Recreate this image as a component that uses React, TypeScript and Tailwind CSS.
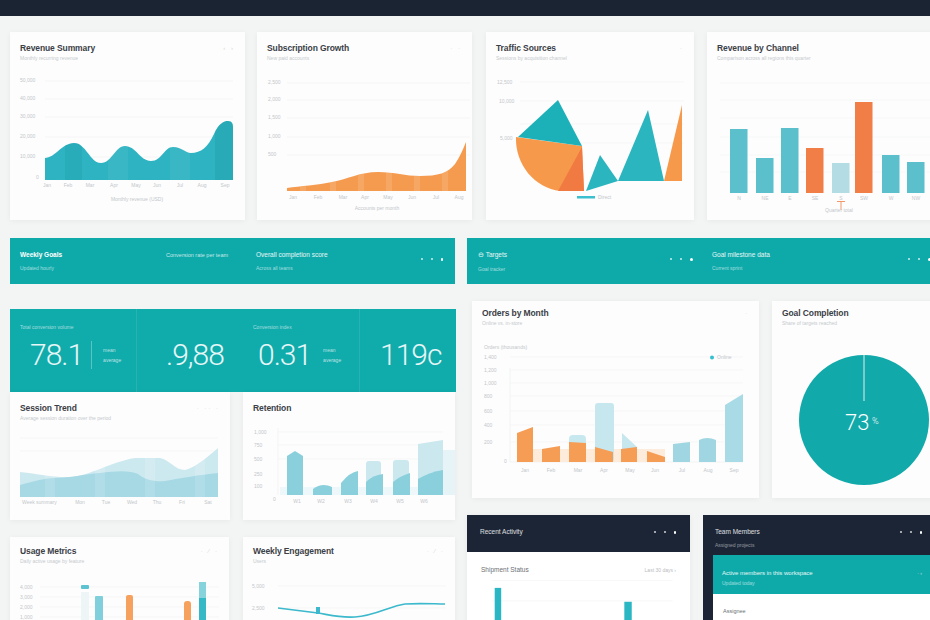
import React from "react";

const tick = { fontSize: 5, fill: "#c3c7cb" } as const;

function Card({ className, children }: { className: string; children?: React.ReactNode }) {
  return (
    <div
      className={`shrink-0 flex flex-col overflow-hidden bg-[#fdfdfd] shadow-[0_1px_6px_rgba(0,0,0,0.05)] ${className}`}
    >
      {children}
    </div>
  );
}

function Head({
  title,
  sub,
  pt,
  h,
  icons,
}: {
  title: string;
  sub: string;
  pt: string;
  h: string;
  icons?: string;
}) {
  return (
    <div className={`flex shrink-0 items-start justify-between px-[10px] ${pt} ${h}`}>
      <div className="flex flex-col">
        <span className="text-[8.5px] font-bold leading-[10px] tracking-[-0.1px] text-[#3b4046]">{title}</span>
        <span className="mt-[2px] text-[5px] leading-[6px] text-[#c6cacd]">{sub}</span>
      </div>
      {icons && <span className="pt-[1px] text-[6px] leading-[8px] tracking-[2px] text-[#d3d6d9]">{icons}</span>}
    </div>
  );
}

function Dots({ className }: { className: string }) {
  return (
    <div className={`flex items-center gap-[8px] ${className}`}>
      <span className="h-[2px] w-[2px] rounded-full bg-white/80" />
      <span className="h-[2px] w-[2px] rounded-full bg-white/80" />
      <span className="h-[2.5px] w-[2.5px] rounded-full bg-white" />
    </div>
  );
}

function Stat({ value, label }: { value: string; label?: string }) {
  return (
    <div className="flex flex-col pt-[15px]">
      <span className="h-[6px] text-[5px] leading-[6px] text-white/60">{label ?? ""}</span>
      <div className="mt-[10px] flex h-[30px] items-center">
        <span className="font-['Roboto',sans-serif] text-[30px] font-light leading-[30px] tracking-[-1px] text-white/90">
          {value}
        </span>
      </div>
    </div>
  );
}

export default function App() {
  return (
    <div className="h-[620px] w-[930px] overflow-hidden bg-[#f3f4f4] font-['Liberation_Sans',Arial,sans-serif]">
      <div className="h-4 bg-[#1a2433]" />

      {/* row 1 */}
      <div className="ml-[10px] mt-4 flex items-start">
        <Card className="h-[188px] w-[235px]">
          <Head title="Revenue Summary" sub="Monthly recurring revenue" pt="pt-[11px]" h="h-[36px]" icons="‹ ›" />
          <svg width={235} height={152} viewBox="10 68 235 152">
            <defs>
              <clipPath id="c1">
                <path d="M45 180 L45 158 C55 158 62 143 74 143 C86 143 90 163 101 163 C112 163 115 146 125 146 C136 146 140 161 151 161 C162 161 164 147 173 147 C182 147 185 153 191 153 C201 153 208 147 214 134 C219 123 224 121 228 121 C232 121 233 124 233 127 L233 180 Z" />
              </clipPath>
            </defs>
            {[81, 99, 117, 137, 157].map((y) => (
              <line key={y} x1={45} x2={233} y1={y} y2={y} stroke="#f1f2f3" strokeWidth={0.6} />
            ))}
            {["50,000", "40,000", "30,000", "20,000", "10,000"].map((t, i) => (
              <text key={t} x={20} y={[82, 100, 118, 138, 158][i]} {...tick}>
                {t}
              </text>
            ))}
            <text x={36} y={179} {...tick}>0</text>
            <g clipPath="url(#c1)">
              <rect x={45} y={100} width={190} height={80} fill="#2db3c1" />
              <rect x={65} y={100} width={17} height={80} fill="#1a8f9c" opacity={0.18} />
              <rect x={108} y={100} width={20} height={80} fill="#ffffff" opacity={0.06} />
              <rect x={170} y={100} width={20} height={80} fill="#ffffff" opacity={0.06} />
              <rect x={215} y={100} width={18} height={80} fill="#1a8f9c" opacity={0.25} />
            </g>
            {["Jan", "Feb", "Mar", "Apr", "May", "Jun", "Jul", "Aug", "Sep"].map((t, i) => (
              <text key={t} x={[47, 68, 90, 114, 136, 157, 180, 202, 225][i]} y={187} textAnchor="middle" {...tick}>
                {t}
              </text>
            ))}
            <text x={137} y={201} textAnchor="middle" {...tick}>Monthly revenue (USD)</text>
          </svg>
        </Card>

        <Card className="ml-[12px] h-[188px] w-[215px]">
          <Head title="Subscription Growth" sub="New paid accounts" pt="pt-[11px]" h="h-[36px]" icons="· ·" />
          <svg width={215} height={152} viewBox="257 68 215 152">
            <defs>
              <clipPath id="c2">
                <path d="M287 191 L287 188 C300 186 318 185 332 182 C348 179 360 172 378 172 C395 172 405 176 420 176 C438 176 448 173 455 164 C460 157 463 149 466 142 L466 191 Z" />
              </clipPath>
            </defs>
            {[83, 100, 118, 137, 155].map((y) => (
              <line key={y} x1={287} x2={470} y1={y} y2={y} stroke="#f1f2f3" strokeWidth={0.6} />
            ))}
            {["2,500", "2,000", "1,500", "1,000", "500"].map((t, i) => (
              <text key={t} x={268} y={[84, 101, 119, 138, 156][i]} {...tick}>
                {t}
              </text>
            ))}
            <g clipPath="url(#c2)">
              <rect x={287} y={130} width={180} height={62} fill="#f59b4f" />
              {[300, 330, 358, 386, 414, 442].map((x) => (
                <rect key={x} x={x} y={130} width={6} height={62} fill="#ffffff" opacity={0.12} />
              ))}
            </g>
            {["Jan", "Feb", "Mar", "Apr", "May", "Jun", "Jul", "Aug"].map((t, i) => (
              <text key={t} x={[293, 318, 343, 365, 388, 412, 436, 459][i]} y={199} textAnchor="middle" {...tick}>
                {t}
              </text>
            ))}
            <text x={377} y={210} textAnchor="middle" {...tick}>Accounts per month</text>
          </svg>
        </Card>

        <Card className="ml-[14px] h-[188px] w-[208px]">
          <Head title="Traffic Sources" sub="Sessions by acquisition channel" pt="pt-[11px]" h="h-[36px]" icons="·" />
          <svg width={208} height={152} viewBox="486 68 208 152">
            {[82, 101, 124, 143].map((y) => (
              <line key={y} x1={520} x2={684} y1={y} y2={y} stroke="#f3f4f5" strokeWidth={0.6} />
            ))}
            <text x={497} y={84} {...tick}>12,500</text>
            <text x={499} y={103} {...tick}>10,000</text>
            <text x={500} y={140} {...tick}>5,000</text>
            <path d="M516 137 L582 146 L584 191 L560 191 C535 188 515 165 516 137 Z" fill="#f7994b" />
            <path d="M558 191 L584 191 L582 147 Z" fill="#f07a42" />
            <path d="M518 137 L558 100 L582 146 Z" fill="#1cb0b8" />
            <path d="M586 191 L600 155 L618 181 Z" fill="#2ab5bf" />
            <path d="M618 181 L648 110 L664 181 Z" fill="#2ab5bf" />
            <path d="M664 181 L682 105 L682 181 Z" fill="#f7994b" />
            <rect x={577} y={196} width={18} height={2.5} fill="#3cbfcf" />
            <text x={598} y={199} {...tick}>Direct</text>
          </svg>
        </Card>

        <Card className="ml-[13px] h-[188px] w-[230px]">
          <Head title="Revenue by Channel" sub="Comparison across all regions this quarter" pt="pt-[11px]" h="h-[36px]" />
          <svg width={230} height={152} viewBox="707 68 230 152">
            {[83, 100, 118, 137, 155, 172].map((y) => (
              <line key={y} x1={720} x2={935} y1={y} y2={y} stroke="#f4f5f6" strokeWidth={0.6} />
            ))}
            {[
              [730, 129, "#5bbfcc"],
              [756, 158, "#5bbfcc"],
              [781, 128, "#5bbfcc"],
              [806, 148, "#f17e46"],
              [832, 163, "#b3dce4"],
              [855, 102, "#f17e46"],
              [882, 155, "#5bbfcc"],
              [907, 162, "#5bbfcc"],
            ].map(([x, y, c]) => (
              <rect key={x as number} x={x as number} y={y as number} width={17.5} height={193 - (y as number)} fill={c as string} />
            ))}
            {["N", "NE", "E", "SE", "S", "SW", "W", "NW"].map((t, i) => (
              <text key={t} x={[739, 765, 790, 815, 841, 864, 891, 916][i]} y={200} textAnchor="middle" {...tick}>
                {t}
              </text>
            ))}
            <line x1={837} x2={845} y1={201.5} y2={201.5} stroke="#f17e46" strokeWidth={0.8} />
            <line x1={841} x2={841} y1={201.5} y2={210} stroke="#f17e46" strokeWidth={0.8} />
            <text x={839} y={212} textAnchor="middle" {...tick}>Quarter total</text>
          </svg>
        </Card>
      </div>

      {/* row 2: teal bars */}
      <div className="ml-[10px] mt-[18px] flex items-start">
        <div className="flex h-[46px] w-[445px] shrink-0 items-start bg-[#0eaaaa] pl-[10px] pt-[13px] text-white">
          <div className="flex w-[146px] flex-col">
            <span className="text-[6.5px] font-bold leading-[8px]">Weekly Goals</span>
            <span className="mt-[6px] text-[5px] leading-[6px] text-white/60">Updated hourly</span>
          </div>
          <span className="w-[90px] text-[5.5px] leading-[8px] text-white/75">Conversion rate per team</span>
          <div className="flex flex-1 flex-col">
            <span className="text-[6.5px] leading-[8px] text-white/90">Overall completion score</span>
            <span className="mt-[6px] text-[5px] leading-[6px] text-white/60">Across all teams</span>
          </div>
          <Dots className="mr-[12px] mt-[7px]" />
        </div>
        <div className="ml-[12px] flex h-[46px] w-[470px] shrink-0 items-start bg-[#0eaaaa] pl-[11px] pt-[13px] text-white">
          <div className="flex w-[192px] flex-col">
            <span className="text-[6.5px] leading-[8px] text-white/90">⊖ Targets</span>
            <span className="mt-[7px] text-[5px] leading-[6px] text-white/60">Goal tracker</span>
          </div>
          <Dots className="mt-[7px] w-[42px]" />
          <div className="flex w-[196px] flex-col">
            <span className="text-[6.5px] leading-[8px] text-white/90">Goal milestone data</span>
            <span className="mt-[6px] text-[5px] leading-[6px] text-white/60">Current sprint</span>
          </div>
          <Dots className="mt-[7px]" />
        </div>
      </div>

      {/* rows 3 & 4 */}
      <div className="ml-[10px] flex items-start">
        {/* left column */}
        <div className="mt-[25px] flex w-[446px] shrink-0 flex-col">
          <div className="flex h-[83px] bg-[#10abab]">
            <div className="w-[127px] border-r border-white/10 pl-[10px]">
              <div className="flex flex-col pt-[15px]">
                <span className="h-[6px] text-[5px] leading-[6px] text-white/60">Total conversion volume</span>
                <div className="ml-[10px] mt-[10px] flex h-[30px] items-center">
                  <span className="font-['Roboto',sans-serif] text-[30px] font-light leading-[30px] tracking-[-1px] text-white/90">
                    78.1
                  </span>
                  <span className="ml-[8px] h-[28px] w-px bg-white/30" />
                  <div className="ml-[11px] flex flex-col gap-[4px] text-[5px] leading-[6px] text-white/70">
                    <span>mean</span>
                    <span>average</span>
                  </div>
                </div>
              </div>
            </div>
            <div className="w-[106px] pl-[29px]">
              <Stat value=".9,88" />
            </div>
            <div className="w-[117px] border-r border-white/10 pl-[10px]">
              <div className="flex flex-col pt-[15px]">
                <span className="h-[6px] text-[5px] leading-[6px] text-white/60">Conversion index</span>
                <div className="ml-[5px] mt-[10px] flex h-[30px] items-center">
                  <span className="font-['Roboto',sans-serif] text-[30px] font-light leading-[30px] tracking-[-1px] text-white/90">
                    0.31
                  </span>
                  <div className="ml-[12px] flex flex-col gap-[4px] text-[5px] leading-[6px] text-white/70">
                    <span>mean</span>
                    <span>average</span>
                  </div>
                </div>
              </div>
            </div>
            <div className="flex-1 pl-[20px]">
              <Stat value="119c" />
            </div>
          </div>

          <div className="flex items-start">
            <Card className="h-[128px] w-[220px]">
              <Head title="Session Trend" sub="Average session duration over the period" pt="pt-[11px]" h="h-[36px]" icons="· ·· ·" />
              <svg width={220} height={92} viewBox="10 428 220 92">
                <line x1={20} x2={218} y1={438} y2={438} stroke="#f3f4f5" strokeWidth={0.6} />
                <line x1={20} x2={218} y1={451} y2={451} stroke="#f3f4f5" strokeWidth={0.6} />
                <path
                  d="M20 497 L20 472 C40 474 55 478 70 477 C90 476 110 462 135 458 L160 458 C170 460 175 470 185 470 C195 468 210 455 218 448 L218 497 Z"
                  fill="#cde9f0"
                />
                <path
                  d="M20 497 L20 485 C35 481 45 478 55 478 C70 478 85 474 100 473 C115 471 130 470 138 474 C145 480 155 482 165 481 C180 478 200 475 218 473 L218 497 Z"
                  fill="#a6d9e4"
                />
                {[45, 95, 145, 195].map((x) => (
                  <rect key={x} x={x} y={440} width={10} height={57} fill="#ffffff" opacity={0.12} />
                ))}
                <text x={22} y={504} {...tick}>Week summary</text>
                {["Mon", "Tue", "Wed", "Thu", "Fri", "Sat"].map((t, i) => (
                  <text key={t} x={[80, 106, 132, 157, 182, 208][i]} y={504} textAnchor="middle" {...tick}>
                    {t}
                  </text>
                ))}
              </svg>
            </Card>
            <Card className="ml-[13px] h-[128px] w-[212px]">
              <Head title="Retention" sub="" pt="pt-[11px]" h="h-[36px]" />
              <svg width={212} height={92} viewBox="243 428 212 92">
                {[432, 445, 459].map((y) => (
                  <line key={y} x1={278} x2={443} y1={y} y2={y} stroke="#f1f3f4" strokeWidth={0.6} />
                ))}
                <line x1={278} x2={278} y1={428} y2={495} stroke="#eef0f1" strokeWidth={0.6} />
                {["1,000", "750", "500", "250", "100"].map((t, i) => (
                  <text key={t} x={254} y={[434, 447, 461, 476, 488][i]} {...tick}>
                    {t}
                  </text>
                ))}
                <text x={273} y={501} {...tick}>0</text>
                <rect x={280} y={487} width={175} height={8} fill="#eef7f9" />
                <rect x={366} y={461} width={15} height={34} rx={3} fill="#cbe8ef" />
                <rect x={393} y={460} width={16} height={35} rx={3} fill="#cbe8ef" />
                <path d="M418 495 L418 444 L443 440 L443 495 Z" fill="#cbe8ef" />
                <rect x={443} y={450} width={12} height={45} fill="#e6f4f7" />
                <path d="M287 495 L287 456 L295 451 L303 456 L303 495 Z" fill="#8acfdc" />
                <path d="M313 495 L313 489 Q322 482 332 487 L332 495 Z" fill="#8acfdc" />
                <path d="M341 495 L341 483 Q350 472 358 471 L358 495 Z" fill="#8acfdc" />
                <path d="M366 495 L366 482 Q373 475 383 474 L383 495 Z" fill="#8acfdc" />
                <path d="M393 495 L393 482 Q400 476 410 473 L410 495 Z" fill="#8acfdc" />
                <path d="M418 495 L418 479 Q430 472 443 470 L443 495 Z" fill="#8acfdc" />
                {["W1", "W2", "W3", "W4", "W5", "W6"].map((t, i) => (
                  <text key={t} x={[297, 321, 348, 374, 400, 424][i]} y={503} textAnchor="middle" {...tick}>
                    {t}
                  </text>
                ))}
              </svg>
            </Card>
          </div>

          <div className="mt-[17px] flex items-start">
            <Card className="h-[90px] w-[219px]">
              <Head title="Usage Metrics" sub="Daily active usage by feature" pt="pt-[9px]" h="h-[36px]" icons="· ⁄ ·" />
              <svg width={219} height={54} viewBox="10 573 219 54">
                {[587, 597, 607, 617].map((y) => (
                  <line key={y} x1={40} x2={219} y1={y} y2={y} stroke="#f3f4f5" strokeWidth={0.6} />
                ))}
                {["4,000", "3,000", "2,000", "1,000"].map((t, i) => (
                  <text key={t} x={20} y={[589, 599, 609, 619][i]} {...tick}>
                    {t}
                  </text>
                ))}
                <rect x={81} y={585} width={8} height={4} rx={1} fill="#5cc4d0" />
                <rect x={81} y={592} width={8} height={40} fill="#eef5f7" />
                <rect x={95} y={596} width={8} height={40} rx={1} fill="#7fd0da" />
                <rect x={126} y={595} width={7} height={40} rx={2} fill="#f6a25e" />
                <rect x={184} y={601} width={7} height={40} rx={3} fill="#f6a25e" />
                <rect x={199} y={582} width={7} height={17} fill="#86d3dc" />
                <rect x={199} y={598} width={7} height={40} fill="#35b9c6" />
              </svg>
            </Card>
            <Card className="ml-[14px] h-[90px] w-[212px]">
              <Head title="Weekly Engagement" sub="Users" pt="pt-[9px]" h="h-[36px]" icons="· ⁄ ·" />
              <svg width={212} height={54} viewBox="243 573 212 54">
                <line x1={278} x2={446} y1={586} y2={586} stroke="#f3f4f5" strokeWidth={0.6} />
                <line x1={278} x2={446} y1={608} y2={608} stroke="#f3f4f5" strokeWidth={0.6} />
                <text x={252} y={588} {...tick}>5,000</text>
                <text x={252} y={610} {...tick}>2,500</text>
                <path
                  d="M278 608 C295 610 310 612 318 613 C330 615 340 618 355 617 C375 616 390 606 405 604 C420 603 435 604 445 604"
                  fill="none"
                  stroke="#3cb9cc"
                  strokeWidth={1.6}
                />
                <rect x={316} y={607} width={4} height={7} fill="#3cb9cc" />
              </svg>
            </Card>
          </div>
        </div>

        {/* right column */}
        <div className="ml-[11px] mt-[17px] flex shrink-0 flex-col">
          <div className="ml-[5px] flex items-start">
            <Card className="h-[197px] w-[287px]">
              <Head title="Orders by Month" sub="Online vs. in-store" pt="pt-[7px]" h="h-[32px]" icons="·" />
              <svg width={287} height={165} viewBox="472 333 287 165">
                {[357, 370, 383, 396, 411, 425, 442].map((y) => (
                  <line key={y} x1={510} x2={743} y1={y} y2={y} stroke="#f3f4f5" strokeWidth={0.6} />
                ))}
                <text x={484} y={349} {...tick}>Orders (thousands)</text>
                {["1,400", "1,200", "1,000", "800", "600", "400", "200"].map((t, i) => (
                  <text key={t} x={484} y={[359, 372, 385, 398, 413, 427, 444][i]} {...tick}>
                    {t}
                  </text>
                ))}
                <text x={504} y={463} {...tick}>0</text>
                <circle cx={712} cy={357.5} r={2} fill="#33c0d0" />
                <text x={717} y={359} {...tick}>Online</text>
                <line x1={510} x2={510} y1={368} y2={462} stroke="#eceeef" strokeWidth={0.6} />
                <line x1={510} x2={743} y1={462} y2={462} stroke="#eceeef" strokeWidth={0.6} />
                <rect x={533} y={449} width={132} height={13} fill="#fdebdc" />
                <rect x={569} y={435} width={17} height={27} rx={4} fill="#c8e8ef" />
                <rect x={595} y={403} width={19} height={59} rx={3} fill="#c6e7ee" />
                <path d="M622 462 L622 433 L637 447 L637 462 Z" fill="#c6e7ee" />
                <path d="M517 462 L517 433 L533 427 L533 462 Z" fill="#f59c55" />
                <path d="M542 462 L542 449 L560 446 L560 462 Z" fill="#f59c55" />
                <path d="M569 462 L569 442 L586 443 L586 462 Z" fill="#f59c55" />
                <path d="M595 462 L595 447 L613 452 L613 462 Z" fill="#f59c55" />
                <path d="M621 462 L621 449 L637 447 L637 462 Z" fill="#f59c55" />
                <path d="M647 462 L647 451 L665 457 L665 462 Z" fill="#f59c55" />
                <path d="M673 462 L673 444 L690 442 L690 462 Z" fill="#9fd6e2" />
                <path d="M699 462 L699 440 Q707 436 716 440 L716 462 Z" fill="#9fd6e2" />
                <path d="M725 462 L725 405 L743 394 L743 462 Z" fill="#a9dbe6" />
                {["Jan", "Feb", "Mar", "Apr", "May", "Jun", "Jul", "Aug", "Sep"].map((t, i) => (
                  <text key={t} x={[525, 551, 578, 604, 630, 655, 682, 708, 734][i]} y={472} textAnchor="middle" {...tick}>
                    {t}
                  </text>
                ))}
              </svg>
            </Card>
            <Card className="ml-[13px] h-[197px] w-[170px]">
              <Head title="Goal Completion" sub="Share of targets reached" pt="pt-[7px]" h="h-[32px]" />
              <svg width={170} height={165} viewBox="772 333 170 165">
                <circle cx={864} cy={420} r={65} fill="#11a9aa" />
                <line x1={864} x2={864} y1={355} y2={401} stroke="#ffffff" strokeOpacity={0.85} strokeWidth={1} />
                <text x={845} y={430} fontSize={22} fontWeight={300} fill="#ffffff" fontFamily="Roboto, sans-serif">
                  73
                </text>
                <text x={872} y={424} fontSize={9} fontWeight={300} fill="#ffffff" fontFamily="Roboto, sans-serif">
                  %
                </text>
              </svg>
            </Card>
          </div>

          <div className="mt-[17px] flex items-start">
            <div className="flex h-[110px] w-[223px] shrink-0 flex-col bg-white shadow-[0_1px_6px_rgba(0,0,0,0.05)]">
              <div className="flex h-[39px] items-start justify-between bg-[#1b2536] pl-[13px] pr-[14px] pt-[13px]">
                <span className="text-[6.5px] leading-[8px] text-white/85">Recent Activity</span>
                <Dots className="mt-[3px]" />
              </div>
              <div className="flex items-start justify-between px-[14px] pt-[14px]">
                <span className="text-[6.5px] leading-[8px] text-[#6b7075]">Shipment Status</span>
                <span className="text-[5px] leading-[8px] text-[#b9bdc1]">Last 30 days ›</span>
              </div>
              <svg width={223} height={55} viewBox="467 578 223 55">
                <line x1={485} x2={680} y1={585} y2={585} stroke="#f2f3f4" strokeWidth={0.6} />
                <line x1={485} x2={680} y1={607} y2={607} stroke="#f2f3f4" strokeWidth={0.6} />
                <rect x={488} y={593} width={7} height={40} fill="#2bb6c4" />
                <rect x={628} y={608} width={8} height={40} fill="#2bb6c4" />
              </svg>
            </div>

            <div className="ml-[13px] flex h-[110px] w-[227px] shrink-0 flex-col bg-[#1b2536]">
              <div className="flex h-[40px] items-start justify-between pl-[12px] pr-[8px] pt-[13px]">
                <div className="flex flex-col">
                  <span className="text-[6.5px] leading-[8px] text-white/85">Team Members</span>
                  <span className="mt-[6px] text-[5px] leading-[6px] text-white/50">Assigned projects</span>
                </div>
                <Dots className="mt-[3px]" />
              </div>
              <div className="ml-[10px] flex flex-1 flex-col bg-white">
                <div className="flex h-[39px] items-start justify-between bg-[#0eaaaa] pl-[9px] pr-[8px] pt-[14px]">
                  <div className="flex flex-col">
                    <span className="text-[6px] leading-[8px] text-white/90">Active members in this workspace</span>
                    <span className="mt-[3px] text-[5px] leading-[6px] text-white/55">Updated today</span>
                  </div>
                  <span className="text-[5px] leading-[8px] text-white/70">· ›</span>
                </div>
                <span className="pl-[10px] pt-[13px] text-[5.5px] leading-[8px] text-[#6b7075]">Assignee</span>
              </div>
            </div>
          </div>
        </div>
      </div>
    </div>
  );
}
